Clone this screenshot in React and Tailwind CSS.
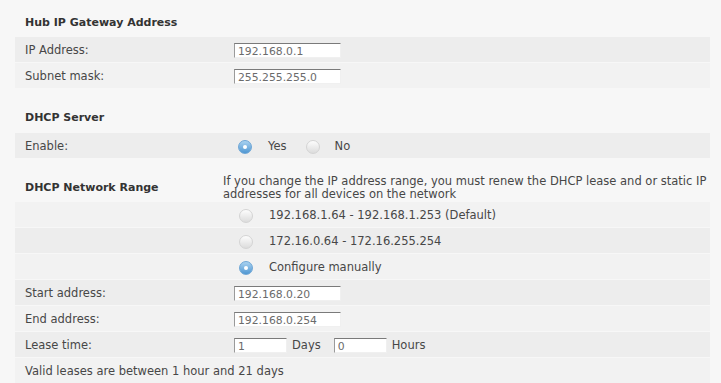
import React from 'react';

const Radio = ({ checked }) => (
    <span
        className={`inline-block w-[14px] h-[14px] rounded-full shrink-0 relative ${
            checked
                ? 'bg-gradient-to-b from-[#a9d2f0] to-[#4f97d2] border border-[#6ea6d6]'
                : 'bg-gradient-to-b from-[#fdfdfd] to-[#dcdcdc] border border-[#d4d4d4]'
        }`}
    >
        {checked && (
            <span className="absolute left-1/2 top-1/2 w-[4px] h-[4px] -ml-[2px] -mt-[2px] rounded-full bg-white" />
        )}
    </span>
);

const Field = ({ value, width = 'w-[107px]' }) => (
    <input
        readOnly
        value={value}
        className={`${width} h-[15px] bg-white border-t border-l border-t-[#7a7a7a] border-l-[#9a9a9a] border-r border-b border-r-[#f0f0f0] border-b-[#f0f0f0] pl-[3px] pt-px text-[10.8px] leading-[13px] text-[#6b6b6b] outline-none font-['DejaVu_Sans',sans-serif]`}
    />
);

const Row = ({ label, dark, children }) => (
    <div className={`flex h-[25px] items-center pt-[2px] ${dark ? 'bg-[#ededed]' : 'bg-[#f2f2f2]'}`}>
        <div className="w-[219px] shrink-0 pl-[10px]">{label}</div>
        <div className="flex items-center">{children}</div>
    </div>
);

const Heading = ({ children, className }) => (
    <div className={`pl-[10px] text-[11px] font-bold text-[#333] leading-[13px] ${className}`}>{children}</div>
);

export default function App() {
    return (
        <div className="min-h-screen bg-[#f7f7f7] pl-[15px] pr-[11px] font-['DejaVu_Sans',sans-serif] text-[11.5px] text-[#474747]">
            <Heading className="pt-[16px] pb-[8px]">Hub IP Gateway Address</Heading>
            <div className="flex flex-col gap-px">
                <Row label="IP Address:" dark>
                    <Field value="192.168.0.1" />
                </Row>
                <Row label="Subnet mask:">
                    <Field value="255.255.255.0" />
                </Row>
            </div>

            <Heading className="pt-[23px] pb-[9px]">DHCP Server</Heading>
            <Row label="Enable:" dark>
                <span className="ml-[4px] flex"><Radio checked /></span>
                <span className="ml-[16px]">Yes</span>
                <span className="ml-[19px] flex"><Radio /></span>
                <span className="ml-[15px]">No</span>
            </Row>

            <div className="flex items-center pt-[17px] pb-px">
                <div className="w-[208px] shrink-0 pl-[10px] text-[11px] font-bold text-[#333]">DHCP Network Range</div>
                <p className="leading-[13px] whitespace-nowrap">
                    If you change the IP address range, you must renew the DHCP lease and or static IP
                    <br />
                    addresses for all devices on the network
                </p>
            </div>
            <div className="flex flex-col gap-px">
                <Row label="">
                    <span className="ml-[5px] flex"><Radio /></span>
                    <span className="ml-[16px]">192.168.1.64 - 192.168.1.253 (Default)</span>
                </Row>
                <Row label="" dark>
                    <span className="ml-[5px] flex"><Radio /></span>
                    <span className="ml-[16px]">172.16.0.64 - 172.16.255.254</span>
                </Row>
                <Row label="">
                    <span className="ml-[5px] flex"><Radio checked /></span>
                    <span className="ml-[16px]">Configure manually</span>
                </Row>
                <Row label="Start address:" dark>
                    <Field value="192.168.0.20" />
                </Row>
                <Row label="End address:">
                    <Field value="192.168.0.254" />
                </Row>
                <Row label="Lease time:" dark>
                    <Field value="1" width="w-[53px]" />
                    <span className="ml-[5px]">Days</span>
                    <span className="ml-[13px] flex"><Field value="0" width="w-[53px]" /></span>
                    <span className="ml-[5px]">Hours</span>
                </Row>
                <div className="flex h-[25px] items-center pt-[2px] bg-[#f2f2f2] pl-[10px]">
                    Valid leases are between 1 hour and 21 days
                </div>
            </div>
        </div>
    );
}
